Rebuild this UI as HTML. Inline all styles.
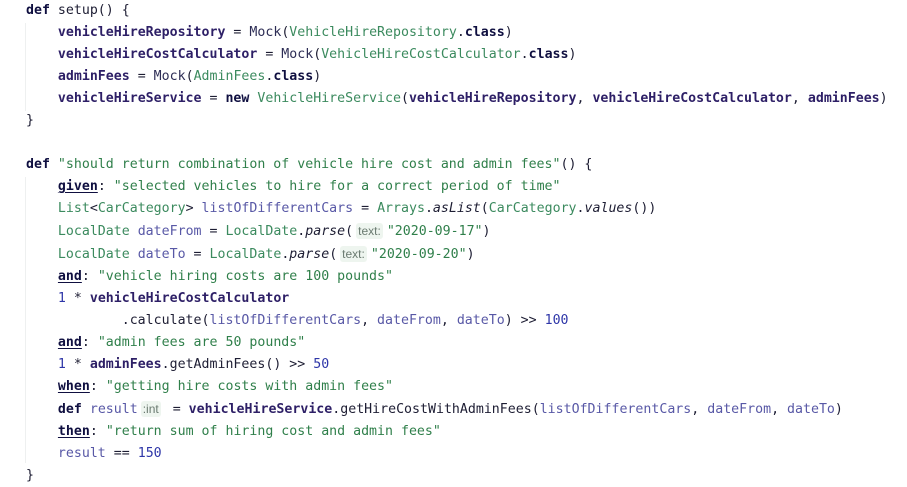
<!DOCTYPE html>
<html><head><meta charset="utf-8"><style>
body{margin:0;background:#fff;width:907px;height:486px;overflow:hidden;position:relative}
.code{position:absolute;left:26px;top:0px;font-family:"DejaVu Sans Mono","Liberation Mono",monospace;font-size:13.25px;line-height:22px;white-space:pre;color:#1d1d33}
.k{color:#0f0f40;font-weight:bold}
.f{color:#2d1f66;font-weight:bold}
.c{color:#3b8a5e}
.s{color:#2f7f4a}
.v{color:#5858a6}
.n{color:#2e36a8}
.m{color:#2d2d55}
.u{color:#0f0f40;font-weight:bold;text-decoration:underline;text-underline-offset:2px}
.i{font-style:italic}
.h{font-family:"Liberation Sans",sans-serif;font-size:12px;color:#6a7a70;background:#eef5ef;padding:1px 2px;margin:0 4px 0 3px;border-radius:3px}
.g{position:absolute;left:25px;width:1px;background:#eef0f0}
</style></head><body>
<div class="g" style="top:23px;height:88px"></div>
<div class="g" style="top:177px;height:286px"></div>
<div class="code"><span class="k">def</span> setup() {
    <span class="f">vehicleHireRepository</span> = <span class="m">Mock</span>(<span class="c">VehicleHireRepository</span>.<span class="k">class</span>)
    <span class="f">vehicleHireCostCalculator</span> = <span class="m">Mock</span>(<span class="c">VehicleHireCostCalculator</span>.<span class="k">class</span>)
    <span class="f">adminFees</span> = <span class="m">Mock</span>(<span class="c">AdminFees</span>.<span class="k">class</span>)
    <span class="f">vehicleHireService</span> = <span class="k">new</span> <span class="c">VehicleHireService</span>(<span class="f">vehicleHireRepository</span>, <span class="f">vehicleHireCostCalculator</span>, <span class="f">adminFees</span>)
}

<span class="k">def</span> <span class="s">"should return combination of vehicle hire cost and admin fees"</span>() {
    <span class="u">given</span>: <span class="s">"selected vehicles to hire for a correct period of time"</span>
    <span class="c">List</span>&lt;<span class="c">CarCategory</span>&gt; <span class="v">listOfDifferentCars</span> = <span class="c">Arrays</span>.<span class="i">asList</span>(<span class="c">CarCategory</span>.<span class="i">values</span>())
    <span class="c">LocalDate</span> <span class="v">dateFrom</span> = <span class="c">LocalDate</span>.<span class="i">parse</span>(<span class="h">text:</span><span class="s">"2020-09-17"</span>)
    <span class="c">LocalDate</span> <span class="v">dateTo</span> = <span class="c">LocalDate</span>.<span class="i">parse</span>(<span class="h">text:</span><span class="s">"2020-09-20"</span>)
    <span class="u">and</span>: <span class="s">"vehicle hiring costs are 100 pounds"</span>
    <span class="n">1</span> * <span class="f">vehicleHireCostCalculator</span>
            .calculate(<span class="v">listOfDifferentCars</span>, <span class="v">dateFrom</span>, <span class="v">dateTo</span>) &gt;&gt; <span class="n">100</span>
    <span class="u">and</span>: <span class="s">"admin fees are 50 pounds"</span>
    <span class="n">1</span> * <span class="f">adminFees</span>.getAdminFees() &gt;&gt; <span class="n">50</span>
    <span class="u">when</span>: <span class="s">"getting hire costs with admin fees"</span>
    <span class="k">def</span> <span class="v">result</span><span class="h">:int</span> = <span class="f">vehicleHireService</span>.getHireCostWithAdminFees(<span class="v">listOfDifferentCars</span>, <span class="v">dateFrom</span>, <span class="v">dateTo</span>)
    <span class="u">then</span>: <span class="s">"return sum of hiring cost and admin fees"</span>
    <span class="v">result</span> == <span class="n">150</span>
}</div>
</body></html>
